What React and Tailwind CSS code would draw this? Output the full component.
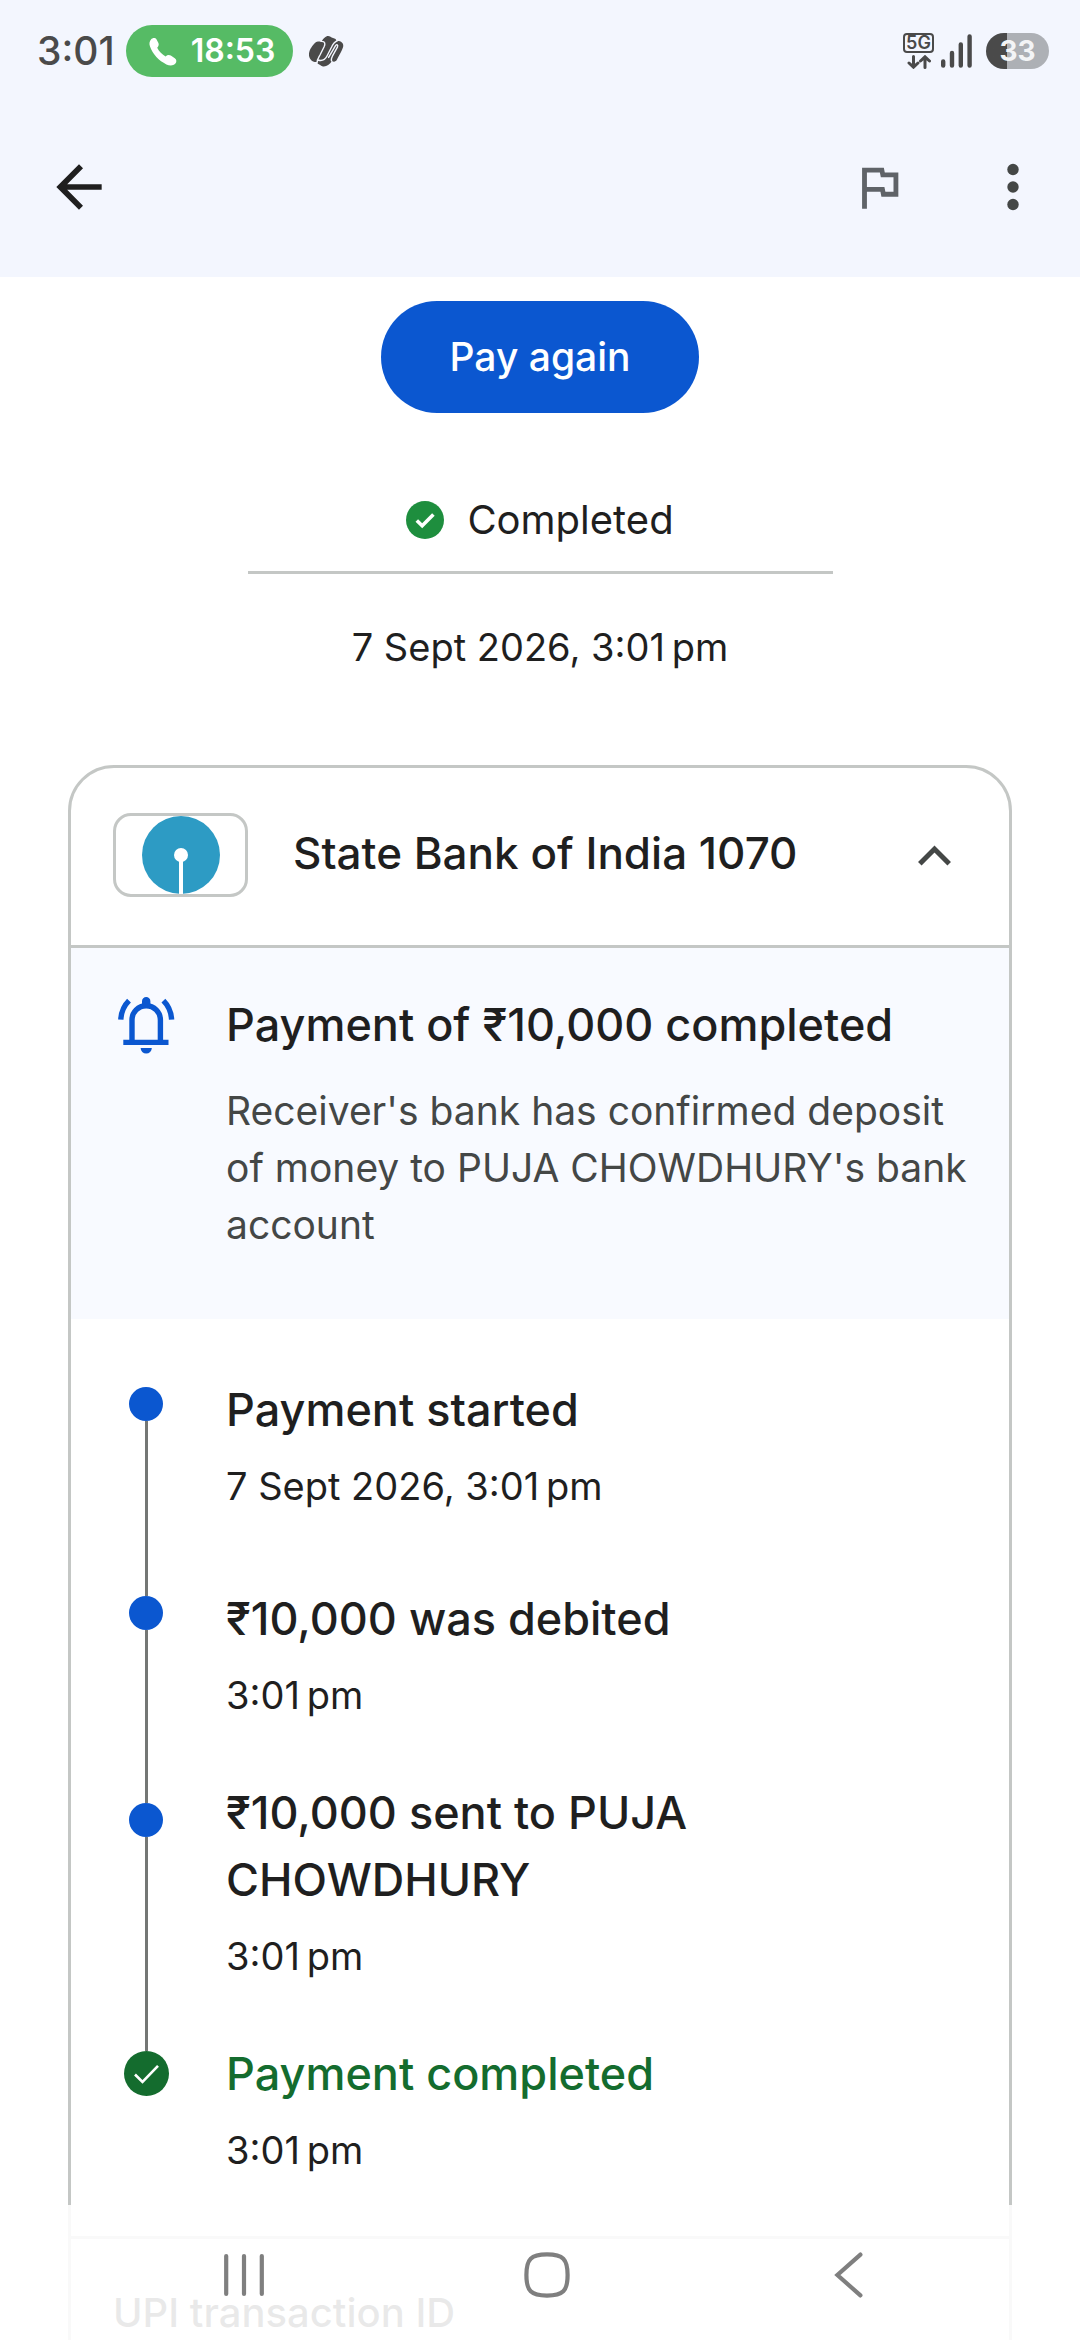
import { useState } from 'react';

const STEPS = [
  {
    title: 'Payment started',
    time: '7 Sept 2026, 3:01\u202fpm',
    lead: 'h-[11px] bg-transparent',
    space: 'pb-[75px]'
  },
  {
    title: '₹10,000 was debited',
    time: '3:01\u202fpm',
    lead: 'h-[11px] bg-[#747775]',
    space: 'pb-[60px]'
  },
  {
    title: '₹10,000 sent to PUJA CHOWDHURY',
    time: '3:01\u202fpm',
    lead: 'h-[24px] bg-[#747775]',
    space: 'pb-[60px]'
  },
  {
    title: 'Payment completed',
    time: '3:01\u202fpm',
    lead: 'h-[11px] bg-[#747775]',
    space: 'pb-[62px]',
    done: true
  }
];

function StatusBar() {
  return (
    <div className="flex items-center h-[77px] pt-[25px] pl-[37px] pr-[31px] text-[#4a4a4a]">
      <span className="text-[39px] leading-[52px] font-medium">3:01</span>
      <div className="flex items-center ml-[11px] h-[52px] w-[167px] pl-[23px] gap-[14px] rounded-full bg-[#56bb65] text-white">
        <svg viewBox="0 0 28 29" className="w-[28px] h-[29px]" aria-hidden="true">
          <path
            d="M2 2.5 C3.5 0.6 6.3 0.4 7.6 2.4 L9.4 6 C10.2 7.8 9.4 9.4 8.2 10.8 C10 14.5 13.2 17.8 16.6 19.4 C18.2 18 20 17.6 21.8 18.6 L25.8 21.2 C28 22.8 27.7 25.2 26.2 26.8 C24 29 20.6 28.9 17.4 27.4 C10 24 3.6 17 1 9.6 C0 6.8 0.4 4.4 2 2.5 Z"
            fill="currentColor"
          />
        </svg>
        <span className="text-[32px] leading-[52px] font-semibold">18:53</span>
      </div>
      <svg viewBox="0 0 36 32" className="ml-[15px] w-[36px] h-[32px]" aria-hidden="true">
        <path
          d="M7.5 7.5 C9 6 11.5 6.5 13.5 6.6 C15 3.5 18 1 20 1 C22 1 23 2.6 25 3 C27 3.4 28.6 4.4 28.4 6 C32 5.4 36 7.4 35.2 11.4 C34.6 14.6 31 20.4 29 24.6 C28 26.8 25.6 27.4 24 26 C21.6 29.6 18 32 15 31.4 C13 31 12 29.6 9.8 28.8 C9.2 28.4 9 27.6 9 27 C4 27.4 0.4 23.4 1 18.4 C1.6 14.4 4.6 10 7.5 7.5 Z"
          fill="currentColor"
        />
        <g fill="none" stroke="#f3f6fe" strokeWidth="1.4" strokeLinecap="round" strokeLinejoin="round">
          <path d="M13 6.4 C17.5 6 17.4 9 16 12 L12 20 C10.4 23 9 24.6 9 28" />
          <path d="M9.6 25 C14 26.4 17 25 19 21 L23.6 12 C25 8.6 27 6.6 29.6 5.6" />
          <path d="M23.6 26 C22.8 24.6 23.6 22.8 24.4 21.2 L29.4 12.2 C30.4 10 28.6 8.8 27.4 10.8 L20.6 22.4" />
        </g>
      </svg>

      <div className="flex items-center ml-auto">
        <div className="flex flex-col items-center w-[31px] h-[36px]">
          <span className="flex items-center justify-center w-[31px] h-[20px] rounded-[4px] border-2 border-[#4a4a4a] text-[18px] leading-none font-semibold">
            5G
          </span>
          <svg viewBox="0 0 24 14" className="w-[24px] h-[14px] mt-[2px]" fill="none" stroke="currentColor" strokeWidth="3" strokeLinecap="round" aria-hidden="true">
            <path d="M6.5 1.5 V11 M2 8 L6.5 12.2 L11 8" />
            <path d="M18 12.5 V3 M13.5 6 L18 1.8 L22.5 6" />
          </svg>
        </div>
        <svg viewBox="0 0 31 34" className="ml-[7px] w-[31px] h-[34px]" stroke="currentColor" strokeWidth="4.4" strokeLinecap="round" aria-hidden="true">
          <path d="M2.2 27.5 V31.5 M11 19 V31.5 M19.8 10.5 V31.5 M28.6 2.5 V31.5" />
        </svg>
        <div className="flex items-center justify-center ml-[14px] w-[63px] h-[36px] rounded-full bg-linear-to-r from-[#4a4a4a] from-33% to-[#adb0b5] to-33% text-[#f3f4f6] text-[28px] leading-none font-bold">
          33
        </div>
      </div>
    </div>
  );
}

function Header() {
  return (
    <header className="shrink-0 bg-[#f3f6fe]">
      <StatusBar />
      <div className="flex items-center h-[200px] pt-[20px] pl-[45px] pr-[47px]">
        <button type="button" aria-label="Back" className="text-[#1f1f1f]">
          <svg viewBox="0 0 24 24" className="w-[68px] h-[68px]" fill="currentColor">
            <path d="M20 11H7.83l5.59-5.59L12 4l-8 8 8 8 1.41-1.41L7.83 13H20v-2z" />
          </svg>
        </button>
        <button type="button" aria-label="Report" className="ml-auto text-[#5f6368]">
          <svg viewBox="0 0 24 24" className="w-[58px] h-[58px]" fill="currentColor">
            <path d="M12.36 6l.4 2H18v6h-3.36l-.4-2H7V6h5.36M14 4H5v17h2v-7h5.6l.4 2h7V6h-5.6L14 4z" />
          </svg>
        </button>
        <button type="button" aria-label="More options" className="ml-[85px] text-[#444746]">
          <svg viewBox="0 0 40 48" className="w-[40px] h-[48px]" fill="currentColor">
            <circle cx="20" cy="6.5" r="5.7" />
            <circle cx="20" cy="24" r="5.7" />
            <circle cx="20" cy="41.5" r="5.7" />
          </svg>
        </button>
      </div>
    </header>
  );
}

function BankLogo() {
  return (
    <span className="flex items-center justify-center w-[135px] h-[84px] rounded-[18px] border-3 border-[#c4c7c5]">
      <svg viewBox="0 0 78 78" className="w-[78px] h-[78px]" aria-hidden="true">
        <circle cx="39" cy="39" r="39" fill="#2d9bc4" />
        <circle cx="39" cy="39" r="7" fill="white" />
        <rect x="37" y="42" width="4" height="36" fill="white" />
      </svg>
    </span>
  );
}

function BellIcon() {
  return (
    <svg viewBox="0 0 57 57" className="shrink-0 w-[57px] h-[57px]" fill="none" stroke="#0b57d0" strokeWidth="5.4" aria-hidden="true">
      <path d="M14 44 V23 a14.2 14.2 0 0 1 28.4 0 V44" />
      <path d="M5.3 45.4 H50.5" />
      <path d="M2.8 22.7 C3.2 15 6 8.6 11 3.6" />
      <path d="M53.6 22.7 C53.2 15 50.4 8.6 45.4 3.6" />
      <path d="M24 9 V4.2 a4.2 4.2 0 0 1 8.4 0 V9 Z" fill="#0b57d0" stroke="none" />
      <path d="M22.6 51 H33.8 a5.6 5.6 0 0 1 -11.2 0 Z" fill="#0b57d0" stroke="none" />
    </svg>
  );
}

function Step({ step, last }) {
  return (
    <li className="flex">
      <div className="flex flex-col items-center w-[66px] mr-[47px]">
        <span className={`w-[3px] ${step.lead}`} />
        {step.done ? (
          <svg viewBox="0 0 45 45" className="w-[45px] h-[45px]" aria-hidden="true">
            <circle cx="22.5" cy="22.5" r="22.5" fill="#146c2e" />
            <path d="M11 23.5 L18.5 31 L34 14.8" fill="none" stroke="white" strokeWidth="2.6" />
          </svg>
        ) : (
          <span className="w-[34px] h-[34px] rounded-full bg-[#0b57d0]" />
        )}
        {!last && <span className="w-[3px] flex-1 bg-[#747775]" />}
      </div>
      <div className={`flex-1 ${step.space}`}>
        <h3 className={`text-[45px] leading-[67px] font-medium ${step.done ? 'text-[#146c2e]' : 'text-[#1f1f1f]'}`}>
          {step.title}
        </h3>
        <p className="mt-[19px] text-[38px] leading-[48px]">{step.time}</p>
      </div>
    </li>
  );
}

function NavigationBar() {
  return (
    <nav className="absolute inset-x-0 bottom-0 flex items-center justify-between h-[135px] pt-[4px] pl-[214px] pr-[201px] bg-white/90 text-[#7f7f7f]">
      <button type="button" aria-label="Recent apps">
        <svg viewBox="0 0 60 60" className="w-[60px] h-[60px]" fill="none" stroke="currentColor" strokeWidth="4.2" strokeLinecap="round">
          <path d="M12.2 11 V49 M30 11 V49 M47.8 11 V49" />
        </svg>
      </button>
      <button type="button" aria-label="Home">
        <svg viewBox="0 0 60 60" className="w-[60px] h-[60px]" fill="none" stroke="currentColor" strokeWidth="4.2">
          <path d="M30 9.4 C46 9.4 50.6 14 50.6 30 C50.6 46 46 50.6 30 50.6 C14 50.6 9.4 46 9.4 30 C9.4 14 14 9.4 30 9.4 Z" />
        </svg>
      </button>
      <button type="button" aria-label="Back to previous screen">
        <svg viewBox="0 0 60 60" className="w-[60px] h-[60px]" fill="none" stroke="currentColor" strokeWidth="4.2" strokeLinecap="round">
          <path d="M41.4 9.6 L18.4 30 L41.4 50.4" />
        </svg>
      </button>
    </nav>
  );
}

export default function App() {
  const [open, setOpen] = useState(true);

  return (
    <div className="relative flex flex-col h-screen overflow-hidden bg-white text-[#1f1f1f] font-['Inter',sans-serif]">
      <Header />

      <main className="flex-1 overflow-hidden pt-[24px]">
        <section className="flex flex-col items-center">
          <button type="button" className="w-[318px] h-[112px] rounded-full bg-[#0b57d0] text-white text-[39px] font-medium">
            Pay again
          </button>
          <div className="flex items-center gap-[23px] mt-[88px] h-[38px]">
            <svg viewBox="0 0 38 38" className="w-[38px] h-[38px]" aria-hidden="true">
              <circle cx="19" cy="19" r="19" fill="#1e8e3e" />
              <path d="M10.8 19.4 L16.2 24.8 L27.4 13.6" fill="none" stroke="white" strokeWidth="3.6" />
            </svg>
            <span className="text-[40px] leading-[38px]">Completed</span>
          </div>
          <hr className="mt-[32px] w-[585px] border-t-3 border-[#c4c7c5]" />
          <p className="mt-[49px] text-[38px] leading-[48px]">7 Sept 2026, 3:01{'\u202f'}pm</p>
        </section>

        <section className="mt-[94px] mx-[68px] rounded-[46px] border-3 border-[#c4c7c5]">
          <button
            type="button"
            aria-expanded={open}
            onClick={() => setOpen(!open)}
            className="flex items-center w-full pt-[45px] pb-[48px] pl-[42px] pr-[58px] text-left"
          >
            <BankLogo />
            <span className="ml-[45px] pb-[4px] text-[44px] leading-[67px] font-medium">State Bank of India 1070</span>
            <svg viewBox="0 0 33 21" className="ml-auto w-[33px] h-[21px]" fill="none" stroke="#444746" strokeWidth="5" aria-hidden="true">
              <path d="M1.8 18.8 L16.5 4 L31.2 18.8" />
            </svg>
          </button>

          {open && (
            <>
              <div className="flex border-t-3 border-[#c4c7c5] bg-[#f8faff] pt-[49px] pb-[66px] pl-[47px] pr-8">
                <BellIcon />
                <div className="ml-[51px]">
                  <h2 className="text-[45px] leading-[56px] font-medium">Payment of ₹10,000 completed</h2>
                  <p className="mt-[29px] text-[39px] leading-[57px] text-[#444746]">
                    Receiver's bank has confirmed deposit of money to PUJA CHOWDHURY's bank account
                  </p>
                </div>
              </div>

              <ol className="pt-[57px] pl-[42px] pr-[100px]">
                {STEPS.map((step, i) => (
                  <Step key={step.title} step={step} last={i === STEPS.length - 1} />
                ))}
              </ol>
            </>
          )}

          <div className="border-t-3 border-[#c4c7c5] px-[42px] pt-[50px] pb-[120px]">
            <h3 className="text-[40px] leading-[48px] font-medium">UPI transaction ID</h3>
          </div>
        </section>
      </main>

      <NavigationBar />
    </div>
  );
}
